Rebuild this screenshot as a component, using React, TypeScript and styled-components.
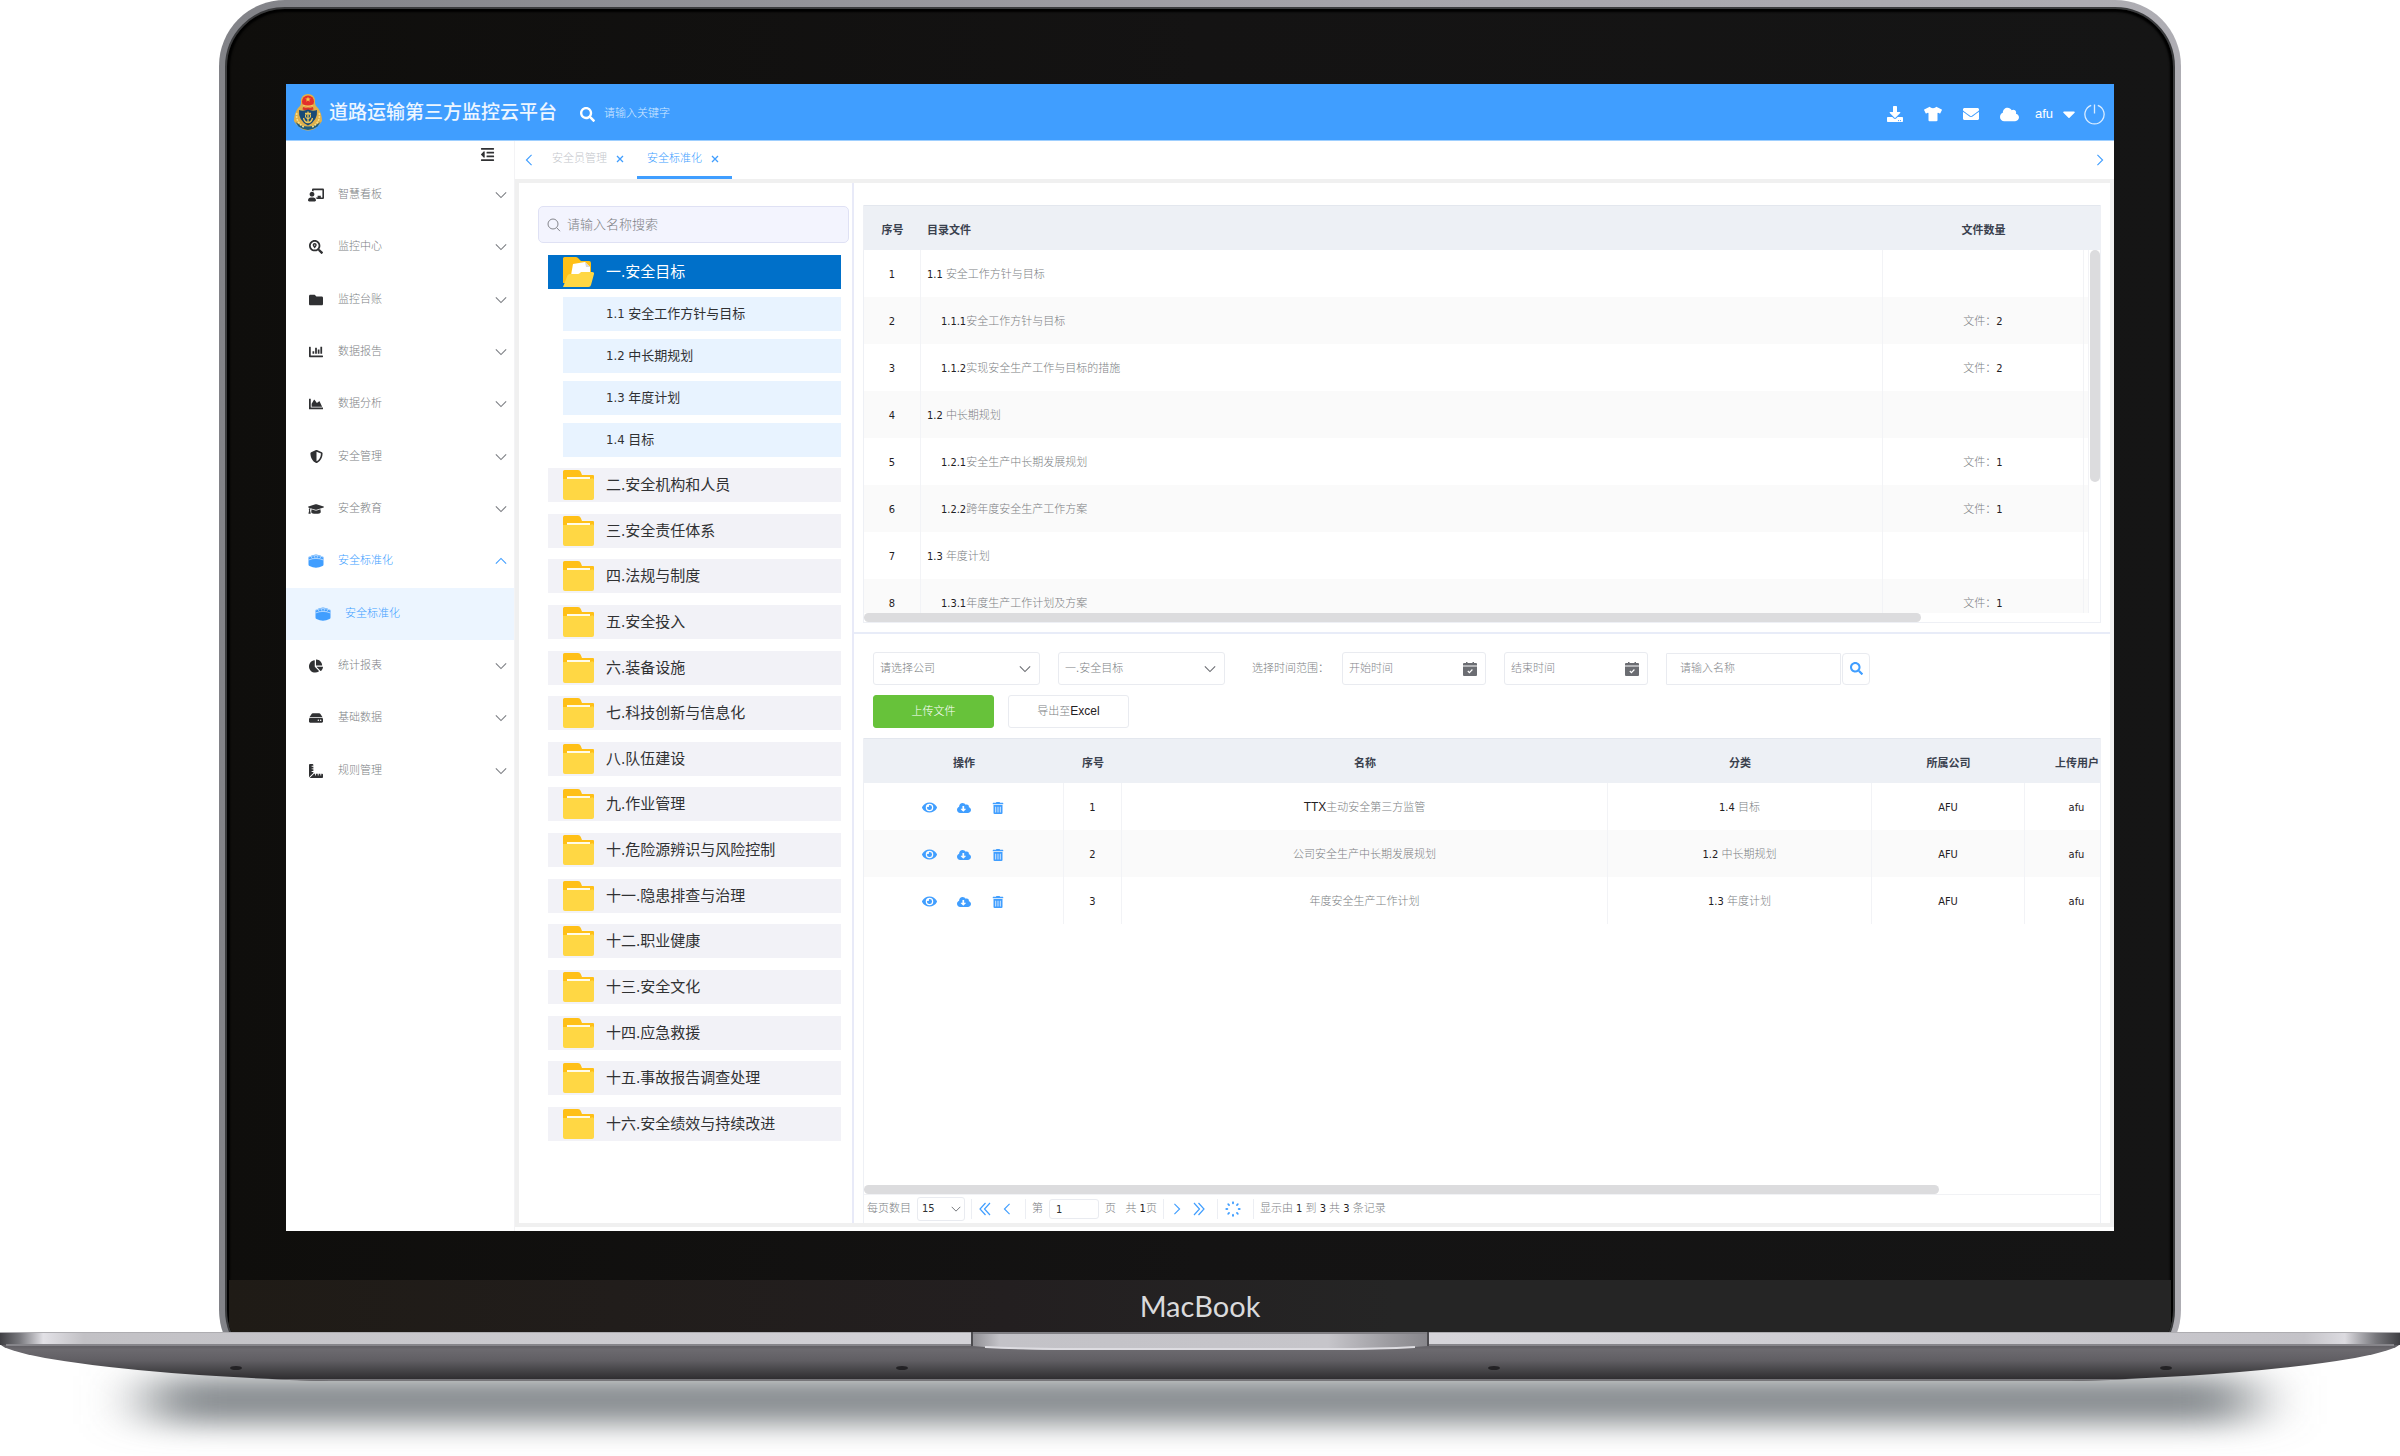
import React from "react";
import styled, { createGlobalStyle } from "styled-components";
import {
  FaChalkboardTeacher,
  FaSearchLocation,
  FaFolder,
  FaChartBar,
  FaChartArea,
  FaShieldAlt,
  FaGraduationCap,
  FaChartPie,
  FaHdd,
  FaRulerCombined,
  FaOutdent,
  FaDownload,
  FaTshirt,
  FaEnvelope,
  FaCloud,
  FaCaretDown,
  FaSearch,
  FaEye,
  FaCloudDownloadAlt,
  FaTrashAlt,
} from "react-icons/fa";

const BLUE = "#409eff";
const CJK = '"DejaVu Sans Condensed", "Noto Sans CJK SC", sans-serif';

const GlobalStyle = createGlobalStyle`
  * { box-sizing: border-box; }
  body { margin: 0; background: #fff; }
  button, input, select { font: inherit; color: inherit; margin: 0; }
  svg { display: block; flex: none; }
  a { color: inherit; text-decoration: none; }
`;

/* ---------- device ---------- */

const Device = styled.div`
  min-height: 100vh;
  display: flex;
  flex-direction: column;
  font-family: ${CJK};
  font-size: 11px;
  line-height: 16px;
  color: #7d7f84;
`;

const LidClip = styled.div`
  flex: 1;
  display: flex;
  overflow: hidden;
  margin: 0 9.125%;
`;

const Lid = styled.div`
  flex: 1;
  min-width: 0;
  display: flex;
  margin-bottom: -44px;
  padding: 7px 6px 6px;
  border-radius: 66px;
  background: linear-gradient(90deg, #828388, #a6a5ab 60%, #aeadb3);
`;

const Bezel = styled.div`
  flex: 1;
  min-width: 0;
  display: flex;
  flex-direction: column;
  border: 2px solid #3a3b3d;
  border-radius: 60px;
  overflow: hidden;
  box-shadow: inset 0 0 2px 3px #000;
  background: linear-gradient(90deg, #0f0e0c, #141313 50%, #151515);
`;

const Screen = styled.main`
  flex: 1;
  min-height: 0;
  margin: 75px 59px 49px;
  display: flex;
  flex-direction: column;
  background: #fff;
  overflow: hidden;
`;

const Chin = styled.div`
  height: 88px;
  flex: none;
  margin: 0 2px;
  padding-top: 10px;
  text-align: center;
  font: 29px/32px Lato, sans-serif;
  color: #dadadc;
  background: linear-gradient(90deg, #1f1b16, #231f20 40%, #252525 60%);
`;

const BaseArt = styled.svg`
  width: 100%;
  height: auto;
`;

/* ---------- header ---------- */

const Header = styled.header`
  height: 57px;
  flex: none;
  display: flex;
  align-items: center;
  padding: 0 9px 0 8px;
  color: #fff;
  background: ${BLUE};
  border-bottom: 1px solid #9fcfff;
`;

const Brand = styled.h1`
  margin: 0 23px 0 7px;
  font-size: 19px;
  line-height: 28px;
  font-weight: 500;
  color: #eef6ff;
`;

const HeaderSearch = styled.label`
  flex: 1;
  display: flex;
  align-items: center;
  gap: 9px;
  padding-top: 4px;
`;

const HeaderInput = styled.input`
  width: 160px;
  padding: 0;
  border: 0;
  outline: 0;
  background: none;
  &::placeholder {
    color: #d4e9ff;
    font-weight: 300;
    opacity: 1;
  }
`;

const HeaderTools = styled.nav`
  display: flex;
  align-items: center;
  gap: 21px;
  padding-top: 4px;
`;

const IconButton = styled.button`
  display: flex;
  align-items: center;
  justify-content: center;
  padding: 0;
  border: 0;
  background: none;
  color: inherit;
  cursor: pointer;
`;

const UserButton = styled(IconButton)`
  gap: 6px;
  font: 13px/16px "Liberation Sans", Arial, sans-serif;
`;

const UserGroup = styled.div`
  display: flex;
  align-items: center;
  gap: 5px;
  margin-left: -5px;
`;

/* ---------- body layout ---------- */

const Body = styled.div`
  flex: 1;
  min-height: 0;
  display: flex;
`;

const Sidebar = styled.aside`
  width: 229px;
  flex: none;
  border-right: 1px solid #f3f3f5;
`;

const CollapseRow = styled.div`
  height: 28px;
  display: flex;
  align-items: flex-start;
  justify-content: flex-end;
  padding: 6px 19px 0 0;
  color: #303133;
`;

const Menu = styled.ul`
  height: 628px;
  margin: 0;
  padding: 0;
  list-style: none;
  display: grid;
  grid-template-rows: repeat(12, 1fr);
`;

const MenuLink = styled.a<{ $active?: boolean; $sub?: boolean }>`
  height: 100%;
  display: flex;
  align-items: center;
  gap: 14px;
  padding: 0 7px 0 ${(p) => (p.$sub ? 29 : 22)}px;
  color: ${(p) => (p.$active ? BLUE : "#7d7f84")};
  font-weight: 300;
  background: ${(p) => (p.$sub ? "#ecf5ff" : "none")};
`;

const MenuIcon = styled.span<{ $active?: boolean }>`
  width: 16px;
  flex: none;
  display: flex;
  justify-content: center;
  color: ${(p) => (p.$active ? BLUE : "#303133")};
`;

const MenuText = styled.span`
  flex: 1;
`;

const Work = styled.div`
  flex: 1;
  min-width: 0;
  display: flex;
  flex-direction: column;
  padding-bottom: 4px;
`;

const TabBar = styled.nav`
  height: 38px;
  flex: none;
  display: flex;
  align-items: center;
  padding: 0 8px;
`;

const Tab = styled.div<{ $active?: boolean }>`
  height: 38px;
  display: flex;
  align-items: center;
  gap: 9px;
  padding: 0 13px 0 10px;
  font-weight: 300;
  color: ${(p) => (p.$active ? BLUE : "#c4c6cb")};
  border-bottom: 3px solid ${(p) => (p.$active ? BLUE : "transparent")};
`;

const TabClose = styled(IconButton)`
  color: ${BLUE};
`;

const TabList = styled.div`
  flex: 1;
  display: flex;
  padding-left: 7px;
`;

const Frame = styled.section`
  flex: 1;
  min-height: 0;
  display: flex;
  border: 4px solid #f0f0f0;
`;

/* ---------- directory tree ---------- */

const TreePanel = styled.div`
  width: 335px;
  flex: none;
  display: flex;
  flex-direction: column;
  padding: 23px 3px 82px 19px;
  border-right: 2px solid #e8eaf8;
`;

const TreeSearch = styled.label`
  height: 37px;
  flex: none;
  display: flex;
  align-items: center;
  gap: 6px;
  padding: 0 8px;
  margin-bottom: 12px;
  border: 1px solid #dfe1f4;
  border-radius: 5px;
  background: #f3f4fe;
`;

const TreeInput = styled.input`
  flex: 1;
  min-width: 0;
  padding: 0;
  border: 0;
  outline: 0;
  background: none;
  font-size: 13px;
  &::placeholder {
    color: #7d7f84;
    font-weight: 300;
    opacity: 1;
  }
`;

const TreeBody = styled.div`
  flex: 1;
  display: flex;
  flex-direction: column;
  padding: 0 8px 0 10px;
`;

const Folder = styled.button<{ $open?: boolean }>`
  width: 100%;
  height: 34px;
  flex: none;
  display: flex;
  align-items: center;
  gap: 12px;
  padding: 0 15px;
  border: 0;
  text-align: left;
  font-size: 15px;
  line-height: 22px;
  cursor: pointer;
  color: ${(p) => (p.$open ? "#fff" : "#303133")};
  background: ${(p) => (p.$open ? "#0070c9" : "#f2f2f7")};
`;

const SubList = styled.div`
  display: grid;
  gap: 8px;
  padding: 8px 0 11px 15px;
`;

const SubItem = styled.button`
  height: 34px;
  padding: 0 0 0 43px;
  border: 0;
  text-align: left;
  font-size: 13px;
  line-height: 20px;
  color: #303133;
  background: #e8f3ff;
  cursor: pointer;
`;

const FolderList = styled.div`
  flex: 1;
  display: flex;
  flex-direction: column;
  justify-content: space-between;
`;

/* ---------- content ---------- */

const Content = styled.div`
  flex: 1;
  min-width: 0;
  display: flex;
  flex-direction: column;
`;

const Catalog = styled.div`
  flex: none;
  padding: 22px 9px 9px;
  border-bottom: 2px solid #e8ecf8;
`;

const TableBox = styled.div`
  border: 1px solid #eef0f5;
  border-top: 0;
`;

const Table = styled.table`
  width: 100%;
  table-layout: fixed;
  border-collapse: separate;
  border-spacing: 0;
`;

const Th = styled.th<{ $left?: boolean }>`
  height: 45px;
  padding: ${(p) => (p.$left ? "6px 0 0 6px" : "6px 0 0")};
  text-align: ${(p) => (p.$left ? "left" : "center")};
  font-weight: 700;
  white-space: nowrap;
  color: #3a414e;
  background: #edf0f5;
  border-top: 1px solid #e3e7ee;
`;

const Td = styled.td<{ $indent?: number }>`
  height: 47px;
  padding: 2px 0 0 ${(p) => p.$indent || 0}px;
  text-align: ${(p) => (p.$indent ? "left" : "center")};
  font-weight: 300;
  white-space: nowrap;
  border-right: 1px solid #f2f3f6;
`;

const Tr = styled.tr`
  &:nth-child(even) td {
    background: #fafafa;
  }
`;

const Strong = styled.span`
  font-weight: 400;
  color: #1f2023;
`;

const CatalogView = styled.div`
  height: 363px;
  display: flex;
  gap: 1px;
`;

const CatalogScroll = styled.div`
  flex: 1;
  min-width: 0;
  overflow: hidden;
`;

const VTrack = styled.div`
  width: 10px;
  flex: none;
`;

const Thumb = styled.div`
  border-radius: 5px;
  background: #dcdcde;
`;

const VThumb = styled(Thumb)`
  height: 232px;
`;

const HThumb = styled(Thumb)<{ $size: string }>`
  width: ${(p) => p.$size};
  height: 9px;
`;

const Files = styled.div`
  flex: 1;
  min-height: 0;
  display: flex;
  flex-direction: column;
`;

const Filters = styled.form`
  flex: none;
  display: flex;
  flex-direction: column;
  gap: 10px;
  padding: 18px 18px 10px 19px;
`;

const FilterRow = styled.div`
  display: flex;
  align-items: center;
`;

const Field = styled.label<{ $w: number }>`
  width: ${(p) => p.$w}px;
  height: 33px;
  margin-right: 18px;
  display: grid;
  align-items: center;
  border: 1px solid #e9ebf0;
  border-radius: 3px;
  & > * {
    grid-area: 1 / 1;
  }
  & > svg {
    justify-self: end;
    pointer-events: none;
    margin-right: 8px;
    color: #6b6d72;
  }
`;

const Select = styled.select`
  width: 100%;
  height: 31px;
  padding: 0 6px;
  border: 0;
  outline: 0;
  appearance: none;
  background: none;
  font-weight: 300;
`;

const Input = styled.input`
  width: 100%;
  min-width: 0;
  height: 31px;
  padding: 0 6px;
  border: 0;
  outline: 0;
  background: none;
  font-weight: 300;
  &::placeholder {
    color: #85878c;
    opacity: 1;
  }
`;

const RangeLabel = styled.span`
  width: 90px;
  margin-left: 9px;
  font-weight: 300;
`;

const NameInput = styled(Input)`
  width: 175px;
  height: 32px;
  padding: 0 13px;
  border: 1px solid #e9ebf0;
  border-radius: 1px;
`;

const SearchButton = styled(IconButton)`
  width: 28px;
  height: 32px;
  margin-left: 1px;
  color: ${BLUE};
  border: 1px solid #e9ebf0;
  border-radius: 4px;
`;

const Button = styled.button<{ $primary?: boolean }>`
  width: 121px;
  height: 33px;
  margin-right: 14px;
  padding: 0;
  border-radius: 3px;
  font-weight: 300;
  cursor: pointer;
  color: ${(p) => (p.$primary ? "#fff" : "#7d7f84")};
  background: ${(p) => (p.$primary ? "#67c23a" : "#fff")};
  border: 1px solid ${(p) => (p.$primary ? "#67c23a" : "#e9ebf0")};
`;

const Latin = styled(Strong)`
  font-family: "Liberation Sans", Arial, sans-serif;
  font-size: 12px;
`;

const FilesBox = styled(TableBox)`
  flex: 1;
  min-height: 0;
  margin: 0 9px;
  border-bottom-width: 0;
  display: flex;
  flex-direction: column;
`;

const FilesScroll = styled.div`
  flex: 1;
  min-height: 0;
  overflow: hidden;
`;

const WideTable = styled(Table)`
  width: 1420px;
`;

const Actions = styled.div`
  display: flex;
  justify-content: center;
  gap: 18px;
  color: ${BLUE};
`;

const ActionButton = styled(IconButton)`
  width: 16px;
`;

const Pager = styled.div`
  height: 29px;
  flex: none;
  display: flex;
  align-items: center;
  gap: 6px;
  padding: 0 3px;
  font-weight: 300;
  border-top: 1px solid #f1f2f5;
`;

const PageSize = styled(Field)`
  height: 24px;
  margin: 0;
  & > svg {
    margin-right: 3px;
  }
`;

const PageSelect = styled(Select)`
  height: 22px;
  padding: 0 4px;
  font-weight: 400;
  color: #303133;
`;

const PageInput = styled(Input)`
  width: 50px;
  height: 20px;
  padding: 0 6px;
  border: 1px solid #e9ebf0;
  border-radius: 3px;
  font-weight: 400;
  color: #303133;
`;

const Rule = styled.span`
  width: 1px;
  height: 20px;
  background: #eceef3;
`;

const PagerIcons = styled.div`
  display: flex;
  gap: 10px;
  padding: 0 6px 0 1px;
  color: ${BLUE};
`;

const PagerText = styled.span`
  white-space: pre;
`;

/* ---------- drawings ---------- */

const Chevron = ({ dir, size = 12, color = "currentColor" }: { dir: "up" | "down" | "left" | "right"; size?: number; color?: string }) => {
  const d = { down: "M1 4l6 6 6-6", up: "M1 10l6-6 6 6", left: "M10 1L4 7l6 6", right: "M4 1l6 6-6 6" }[dir];
  return (
    <svg width={size} height={size} viewBox="0 0 14 14" fill="none" stroke={color} strokeWidth="1.3">
      <path d={d} />
    </svg>
  );
};

const DoubleChevron = ({ dir }: { dir: "left" | "right" }) => (
  <svg width="12" height="14" viewBox="0 0 12 14" fill="none" stroke="currentColor" strokeWidth="1.2">
    <path d={dir === "left" ? "M6.500 1L1 7l5.500 6M11 1L5.500 7l5.500 6" : "M1 1l5.500 6L1 13M5.500 1L11 7l-5.500 6"} />
  </svg>
);

const Cross = () => (
  <svg width="8" height="8" viewBox="0 0 8 8" stroke="currentColor" strokeWidth="1.3">
    <path d="M1 1l6 6M7 1L1 7" />
  </svg>
);

const Magnifier = () => (
  <svg width="14" height="14" viewBox="0 0 14 14" fill="none" stroke="#85868c">
    <circle cx="6" cy="6" r="5" />
    <path d="M9.600 9.600L13 13.200" />
  </svg>
);

const CalendarIcon = () => (
  <svg width="14" height="14" viewBox="0 0 14 14">
    <path d="M0 3.500V2Q0 1 1 1h2V0h1.500v1h5V0H11v1h2q1 0 1 1v1.500z" fill="currentColor" />
    <path d="M0 4.500h14V13q0 1-1 1H1q-1 0-1-1z" fill="currentColor" />
    <path d="M4.800 9l1.600 1.600L9.400 7.500" fill="none" stroke="#fff" strokeWidth="1.200" />
  </svg>
);

const Loader = () => (
  <svg width="16" height="16" viewBox="0 0 16 16" fill={BLUE}>
    {[0, 45, 90, 135, 180, 225, 270, 315].map((a) => (
      <ellipse key={a} cx="8" cy="1.800" rx="1" ry="1.500" transform={`rotate(${a} 8 8)`} />
    ))}
  </svg>
);

const Power = () => (
  <svg width="21" height="21" viewBox="0 0 21 21" fill="none" stroke="#d9ecff" strokeWidth="1.300">
    <path d="M7.200 1.300a9.600 9.600 0 1 0 6.600 0M10.500 0.500v9" />
  </svg>
);

const BoxIcon = () => (
  <svg width="16" height="14" viewBox="0 0 16 14">
    <path d="M0.500 3Q8-2 15.500 3V10.500Q15.500 11.500 14.500 12Q8 15.500 1.500 12Q0.500 11.500 0.500 10.500Z" fill={BLUE} />
    <path d="M0.500 3.200Q8 0 15.500 3.200M0.500 6Q8 2.800 15.500 6" fill="none" stroke="#cfe6ff" strokeWidth="0.800" />
    <path d="M3 2.800l1.500 1.800M6.500 2l0.500 2M9.500 2l-0.500 2M13 2.800l-1.500 1.800" stroke="#cfe6ff" strokeWidth="0.700" />
  </svg>
);

const Emblem = () => (
  <svg width="28" height="37" viewBox="0 0 28 37">
    <path d="M14 0C9 0 6.500 4 7 8c0 3-1 4-3 6C1 18 0 23 0 27c1.500 3 3 3.500 5 5.500 2 2.500 5.500 4 9 4s7-1.500 9-4c2-2 3.500-2.500 5-5.500 0-4-1-9-4-13-2-2-3-3-3-6 .500-4-2-8-7-8z" fill="#e0b04a" />
    <path d="M1.500 28q12.500 9 25 0l-3 4.500q-9.500 7-19 0z" fill="#1f5c7d" />
    <circle cx="14" cy="7.500" r="6" fill="#e3302b" />
    <path d="M14 2.800l.8 1.800h2l-1.600 1.200.6 2-1.800-1.200-1.800 1.200.6-2-1.600-1.200h2z" fill="#f6c94d" />
    <path d="M9 10.500q5 2 10 0v1.500q-5 2-10 0z" fill="#f0c55a" />
    <path d="M9 13q5 2 10 0l.5 2.500q-5.500 2-11 0z" fill="#d8342c" />
    <path d="M5 16q4.500 1.500 9-.500 4.500 2 9 .500 1 10.500-9 15.500Q4 26.500 5 16z" fill="#194a76" />
    <path d="M14 17.500v11M9.500 24q1 4.500 4.500 4.500t4.500-4.500M11 19.500h6" fill="none" stroke="#f1c95a" strokeWidth="1.300" />
    <circle cx="14" cy="22" r="2.600" fill="none" stroke="#f1c95a" />
    <path d="M2.800 19q-1.500 9 7 14M25.200 19q1.500 9-7 14" fill="none" stroke="#f7dd86" strokeWidth="1.600" strokeDasharray="2 1" />
  </svg>
);

const FolderIcon = ({ open }: { open?: boolean }) => (
  <svg width="31" height="30" viewBox="0 0 31 30">
    {open ? (
      <>
        <path d="M0 1.500Q0 0 1.500 0H13q1.500 0 2.500 1.500L18 4h8q2 0 2 2v20H0z" fill="#ffc017" />
        <path d="M10 7l12-2 5 5v14H7z" fill="#fff" />
        <path d="M22 5l5 5h-4z" fill="#d8d8dc" />
        <path d="M4.500 18.500Q5 17 7 17h8q1 0 2-1l1-1h11q2.500 0 2 2l-3 11q-.500 2-2.500 2H0z" fill="#ffd744" />
      </>
    ) : (
      <>
        <path d="M0 1.500Q0 0 1.500 0H15q2 0 2.800 2L19 5h11q1 0 1 1v6H0z" fill="#ffc017" />
        <path d="M4 7h23v3H4z" fill="#fffbe8" />
        <path d="M0 9h26q1.500 0 2.500-.600Q31 8 31 10v18q0 2-2 2H2q-2 0-2-2z" fill="#ffd744" />
      </>
    )}
  </svg>
);

const LaptopBase = () => (
  <BaseArt viewBox="0 0 2400 124" role="img" aria-label="laptop base">
    <defs>
      <linearGradient id="body" x1="0" y1="0" x2="0" y2="1">
        <stop offset="0" stopColor="#5c5a5f" />
        <stop offset="0.150" stopColor="#6c6a6f" />
        <stop offset="0.450" stopColor="#605e63" />
        <stop offset="0.700" stopColor="#474649" />
        <stop offset="1" stopColor="#2a282b" />
      </linearGradient>
      <linearGradient id="strip">
        <stop offset="0" stopColor="#3f3f43" />
        <stop offset="0.008" stopColor="#77777c" />
        <stop offset="0.018" stopColor="#e2e1e6" />
        <stop offset="0.035" stopColor="#c2c1c5" />
        <stop offset="0.400" stopColor="#d3d2d7" />
        <stop offset="0.600" stopColor="#d6d5da" />
        <stop offset="0.960" stopColor="#c4c3c8" />
        <stop offset="0.977" stopColor="#dcdbe0" />
        <stop offset="0.990" stopColor="#77777c" />
        <stop offset="1" stopColor="#3f3f43" />
      </linearGradient>
      <linearGradient id="notch">
        <stop offset="0" stopColor="#8f8e93" />
        <stop offset="0.060" stopColor="#c3c2c7" />
        <stop offset="0.780" stopColor="#c6c5ca" />
        <stop offset="0.920" stopColor="#9b9a9f" />
        <stop offset="1" stopColor="#87868b" />
      </linearGradient>
      <filter id="soft" x="-10%" y="-150%" width="120%" height="400%">
        <feGaussianBlur stdDeviation="32 14" />
      </filter>
    </defs>
    <rect x="150" y="44" width="2100" height="48" fill="#878c90" filter="url(#soft)" />
    <path d="M0 12Q4 18 45 26Q150 44 330 49H2070Q2250 44 2355 26Q2396 18 2400 12z" fill="url(#body)" />
    <path d="M268 47Q300 49 330 49H2070Q2100 49 2132 47z" fill="#77767a" />
    <rect width="2400" height="13" fill="url(#strip)" />
    <rect width="2400" height="1" fill="#aeadb1" />
    <rect x="6" y="12" width="2388" height="2" fill="#86858a" />
    <path d="M972 0H1428V14Q1380 18 1330 18H1070Q1020 18 972 14z" fill="url(#notch)" />
    <path d="M985 15Q1020 17 1070 17H1330Q1380 17 1415 15" fill="none" stroke="#dddce1" strokeWidth="2" />
    <path d="M972 0h456v2H972z" fill="#807f84" />
    <path d="M971 0h2v14h-2zM1427 0h2v14h-2z" fill="#4c4b4f" />
    {[236, 902, 1494, 2166].map((x) => (
      <ellipse key={x} cx={x} cy="36" rx="6" ry="2" fill="#232225" />
    ))}
  </BaseArt>
);

/* ---------- data ---------- */

type MenuEntry = { label: string; icon: React.ReactNode; active?: boolean; sub?: boolean };

const menu: MenuEntry[] = [
  { label: "智慧看板", icon: <FaChalkboardTeacher size={16} /> },
  { label: "监控中心", icon: <FaSearchLocation size={14} /> },
  { label: "监控台账", icon: <FaFolder size={14} /> },
  { label: "数据报告", icon: <FaChartBar size={14} /> },
  { label: "数据分析", icon: <FaChartArea size={14} /> },
  { label: "安全管理", icon: <FaShieldAlt size={13} /> },
  { label: "安全教育", icon: <FaGraduationCap size={16} /> },
  { label: "安全标准化", icon: <BoxIcon />, active: true },
  { label: "安全标准化", icon: <BoxIcon />, active: true, sub: true },
  { label: "统计报表", icon: <FaChartPie size={14} /> },
  { label: "基础数据", icon: <FaHdd size={14} /> },
  { label: "规则管理", icon: <FaRulerCombined size={14} /> },
];

const openItems = ["1.1 安全工作方针与目标", "1.2 中长期规划", "1.3 年度计划", "1.4 目标"];

const folders = [
  "二.安全机构和人员",
  "三.安全责任体系",
  "四.法规与制度",
  "五.安全投入",
  "六.装备设施",
  "七.科技创新与信息化",
  "八.队伍建设",
  "九.作业管理",
  "十.危险源辨识与风险控制",
  "十一.隐患排查与治理",
  "十二.职业健康",
  "十三.安全文化",
  "十四.应急救援",
  "十五.事故报告调查处理",
  "十六.安全绩效与持续改进",
];

const catalog: { code: string; name: string; files?: number }[] = [
  { code: "1.1 ", name: "安全工作方针与目标" },
  { code: "1.1.1", name: "安全工作方针与目标", files: 2 },
  { code: "1.1.2", name: "实现安全生产工作与目标的措施", files: 2 },
  { code: "1.2 ", name: "中长期规划" },
  { code: "1.2.1", name: "安全生产中长期发展规划", files: 1 },
  { code: "1.2.2", name: "跨年度安全生产工作方案", files: 1 },
  { code: "1.3 ", name: "年度计划" },
  { code: "1.3.1", name: "年度生产工作计划及方案", files: 1 },
];

const files = [
  { prefix: "TTX", name: "主动安全第三方监管", code: "1.4 ", kind: "目标" },
  { prefix: "", name: "公司安全生产中长期发展规划", code: "1.2 ", kind: "中长期规划" },
  { prefix: "", name: "年度安全生产工作计划", code: "1.3 ", kind: "年度计划" },
];

/* ---------- app ---------- */

const CatalogCols = ({ last }: { last: number }) => (
  <colgroup>
    <col style={{ width: 57 }} />
    <col />
    <col style={{ width: 201 }} />
    <col style={{ width: last }} />
  </colgroup>
);

export default function App() {
  return (
    <Device>
      <GlobalStyle />
      <LidClip>
        <Lid>
          <Bezel>
            <Screen>
              <Header>
                <Emblem />
                <Brand>道路运输第三方监控云平台</Brand>
                <HeaderSearch>
                  <FaSearch size={15} />
                  <HeaderInput aria-label="关键字" placeholder="请输入关键字" />
                </HeaderSearch>
                <HeaderTools>
                  <IconButton aria-label="下载"><FaDownload size={16} /></IconButton>
                  <IconButton aria-label="主题"><FaTshirt size={18} /></IconButton>
                  <IconButton aria-label="消息"><FaEnvelope size={16} /></IconButton>
                  <IconButton aria-label="云端"><FaCloud size={19} /></IconButton>
                  <UserGroup>
                    <UserButton>afu<FaCaretDown size={20} /></UserButton>
                    <IconButton aria-label="退出"><Power /></IconButton>
                  </UserGroup>
                </HeaderTools>
              </Header>
              <Body>
                <Sidebar>
                  <CollapseRow>
                    <IconButton aria-label="收起菜单"><FaOutdent size={15} /></IconButton>
                  </CollapseRow>
                  <Menu>
                    {menu.map((m, i) => (
                      <li key={i}>
                        <MenuLink href="#" $active={m.active} $sub={m.sub}>
                          <MenuIcon $active={m.active}>{m.icon}</MenuIcon>
                          <MenuText>{m.label}</MenuText>
                          {!m.sub && <Chevron dir={m.active ? "up" : "down"} />}
                        </MenuLink>
                      </li>
                    ))}
                  </Menu>
                </Sidebar>
                <Work>
                  <TabBar>
                    <IconButton aria-label="向左"><Chevron dir="left" color={BLUE} /></IconButton>
                    <TabList>
                      <Tab>
                        安全员管理
                        <TabClose aria-label="关闭安全员管理"><Cross /></TabClose>
                      </Tab>
                      <Tab $active>
                        安全标准化
                        <TabClose aria-label="关闭安全标准化"><Cross /></TabClose>
                      </Tab>
                    </TabList>
                    <IconButton aria-label="向右"><Chevron dir="right" color={BLUE} /></IconButton>
                  </TabBar>
                  <Frame>
                    <TreePanel>
                      <TreeSearch>
                        <Magnifier />
                        <TreeInput aria-label="名称搜索" placeholder="请输入名称搜索" />
                      </TreeSearch>
                      <TreeBody>
                        <Folder $open>
                          <FolderIcon open />
                          一.安全目标
                        </Folder>
                        <SubList>
                          {openItems.map((t) => (
                            <SubItem key={t}>{t}</SubItem>
                          ))}
                        </SubList>
                        <FolderList>
                          {folders.map((t) => (
                            <Folder key={t}>
                              <FolderIcon />
                              {t}
                            </Folder>
                          ))}
                        </FolderList>
                      </TreeBody>
                    </TreePanel>
                    <Content>
                      <Catalog>
                        <TableBox>
                          <Table>
                            <CatalogCols last={16} />
                            <thead>
                              <tr>
                                <Th>序号</Th>
                                <Th $left>目录文件</Th>
                                <Th>文件数量</Th>
                                <Th aria-label="滚动条" />
                              </tr>
                            </thead>
                          </Table>
                          <CatalogView>
                            <CatalogScroll>
                              <Table>
                                <CatalogCols last={5} />
                                <tbody>
                                  {catalog.map((r, i) => (
                                    <Tr key={r.code}>
                                      <Td><Strong>{i + 1}</Strong></Td>
                                      <Td $indent={r.files ? 20 : 6}>
                                        <Strong>{r.code}</Strong>
                                        {r.name}
                                      </Td>
                                      <Td>{r.files && <>文件：<Strong>{r.files}</Strong></>}</Td>
                                      <Td />
                                    </Tr>
                                  ))}
                                </tbody>
                              </Table>
                            </CatalogScroll>
                            <VTrack><VThumb /></VTrack>
                          </CatalogView>
                          <HThumb $size="85.500%" />
                        </TableBox>
                      </Catalog>
                      <Files>
                        <Filters onSubmit={(e) => e.preventDefault()}>
                          <FilterRow>
                            <Field $w={167}>
                              <Select aria-label="公司"><option>请选择公司</option></Select>
                              <Chevron dir="down" />
                            </Field>
                            <Field $w={167}>
                              <Select aria-label="目录"><option>一.安全目标</option></Select>
                              <Chevron dir="down" />
                            </Field>
                            <RangeLabel>选择时间范围：</RangeLabel>
                            <Field $w={144}>
                              <Input aria-label="开始时间" placeholder="开始时间" />
                              <CalendarIcon />
                            </Field>
                            <Field $w={144}>
                              <Input aria-label="结束时间" placeholder="结束时间" />
                              <CalendarIcon />
                            </Field>
                            <NameInput aria-label="名称" placeholder="请输入名称" />
                            <SearchButton aria-label="搜索"><FaSearch size={13} /></SearchButton>
                          </FilterRow>
                          <FilterRow>
                            <Button type="button" $primary>上传文件</Button>
                            <Button type="button">导出至<Latin>Excel</Latin></Button>
                          </FilterRow>
                        </Filters>
                        <FilesBox>
                          <FilesScroll>
                            <WideTable>
                              <colgroup>
                                <col style={{ width: 200 }} />
                                <col style={{ width: 58 }} />
                                <col style={{ width: 486 }} />
                                <col style={{ width: 264 }} />
                                <col style={{ width: 153 }} />
                                <col style={{ width: 104 }} />
                                <col />
                              </colgroup>
                              <thead>
                                <tr>
                                  <Th>操作</Th>
                                  <Th>序号</Th>
                                  <Th>名称</Th>
                                  <Th>分类</Th>
                                  <Th>所属公司</Th>
                                  <Th>上传用户</Th>
                                  <Th aria-label="其他" />
                                </tr>
                              </thead>
                              <tbody>
                                {files.map((f, i) => (
                                  <Tr key={f.name}>
                                    <Td>
                                      <Actions>
                                        <ActionButton aria-label="查看"><FaEye size={15} /></ActionButton>
                                        <ActionButton aria-label="下载"><FaCloudDownloadAlt size={14} /></ActionButton>
                                        <ActionButton aria-label="删除"><FaTrashAlt size={12} /></ActionButton>
                                      </Actions>
                                    </Td>
                                    <Td><Strong>{i + 1}</Strong></Td>
                                    <Td>{f.prefix && <Latin>{f.prefix}</Latin>}{f.name}</Td>
                                    <Td><Strong>{f.code}</Strong>{f.kind}</Td>
                                    <Td><Strong>AFU</Strong></Td>
                                    <Td><Strong>afu</Strong></Td>
                                    <Td />
                                  </Tr>
                                ))}
                              </tbody>
                            </WideTable>
                          </FilesScroll>
                          <HThumb $size="87%" />
                          <Pager>
                            每页数目
                            <PageSize $w={48}>
                              <PageSelect aria-label="每页数目"><option>15</option></PageSelect>
                              <Chevron dir="down" size={10} />
                            </PageSize>
                            <Rule />
                            <PagerIcons>
                              <IconButton aria-label="首页"><DoubleChevron dir="left" /></IconButton>
                              <IconButton aria-label="上一页"><Chevron dir="left" /></IconButton>
                            </PagerIcons>
                            <Rule />
                            第
                            <PageInput aria-label="页码" defaultValue="1" />
                            <PagerText>
                              页{"   "}共 <Strong>1</Strong>页
                            </PagerText>
                            <Rule />
                            <PagerIcons>
                              <IconButton aria-label="下一页"><Chevron dir="right" /></IconButton>
                              <IconButton aria-label="末页"><DoubleChevron dir="right" /></IconButton>
                            </PagerIcons>
                            <Rule />
                            <PagerIcons>
                              <IconButton aria-label="刷新"><Loader /></IconButton>
                            </PagerIcons>
                            <Rule />
                            <PagerText>
                              显示由 <Strong>1</Strong> 到 <Strong>3</Strong> 共 <Strong>3</Strong> 条记录
                            </PagerText>
                          </Pager>
                        </FilesBox>
                      </Files>
                    </Content>
                  </Frame>
                </Work>
              </Body>
            </Screen>
            <Chin>MacBook</Chin>
          </Bezel>
        </Lid>
      </LidClip>
      <LaptopBase />
    </Device>
  );
}
